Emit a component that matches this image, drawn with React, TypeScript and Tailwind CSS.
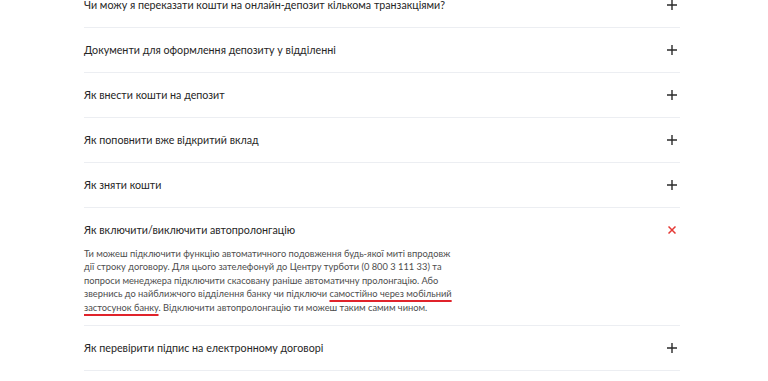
import React from "react";

const QUESTIONS_TOP = [
  "Чи можу я переказати кошти на онлайн-депозит кількома транзакціями?",
  "Документи для оформлення депозиту у відділенні",
  "Як внести кошти на депозит",
  "Як поповнити вже відкритий вклад",
  "Як зняти кошти",
];

const font = { fontFamily: 'Lato, "Noto Sans", sans-serif' };

function PlusIcon() {
  return (
    <svg viewBox="0 0 10 10" className="w-[10px] h-[10px]">
      <path d="M5 0v10M0 5h10" stroke="#2b2b2b" strokeWidth="1.4" />
    </svg>
  );
}

function CloseIcon() {
  return (
    <svg viewBox="0 0 8 8" className="w-[8px] h-[8px]">
      <path d="M0.5 0.5l7 7M7.5 0.5l-7 7" stroke="#e53935" strokeWidth="1.5" />
    </svg>
  );
}

function Row({ title }: { title: string }) {
  return (
    <div className="flex items-center justify-between h-[45px] border-b border-[#eceef2] pr-[3px]">
      <span className="text-[10.7px] leading-[20px] text-[#262626]">{title}</span>
      <PlusIcon />
    </div>
  );
}

export default function App() {
  return (
    <div className="w-[768px] h-[381px] overflow-hidden bg-white" style={font}>
      <div className="ml-[84px] w-[596px] -mt-[17px]">
        {QUESTIONS_TOP.map(q => (
          <Row key={q} title={q} />
        ))}

        {/* Expanded item */}
        <div className="border-b border-[#eceef2] pt-[12px] pb-[11px]">
          <div className="flex items-center justify-between h-[20px] pr-[4px]">
            <span className="text-[10.7px] leading-[20px] text-[#262626]">
              Як включити/виключити автопролонгацію
            </span>
            <CloseIcon />
          </div>
          <p className="mt-[7px] whitespace-nowrap text-[9.3px] leading-[13.4px] text-[#4d4d4d]">
            Ти можеш підключити функцію автоматичного подовження будь-якої миті впродовж
            <br />
            дії строку договору. Для цього зателефонуй до Центру турботи (0 800 3 111 33) та
            <br />
            попроси менеджера підключити скасовану раніше автоматичну пролонгацію. Або
            <br />
            звернись до найближчого відділення банку чи підключи{" "}
            <span className="underline decoration-[#e0232b] decoration-2 underline-offset-[3px]">
              самостійно через мобільний
              <br />
              застосунок банку
            </span>
            . Відключити автопролонгацію ти можеш таким самим чином.
          </p>
        </div>

        <Row title="Як перевірити підпис на електронному договорі" />
      </div>
    </div>
  );
}
